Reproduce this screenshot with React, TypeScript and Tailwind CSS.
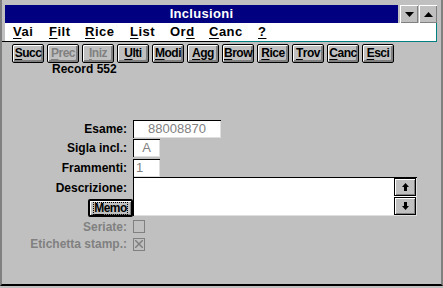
import React from 'react';

// Windows 3.1 style record form ("Inclusioni").

const FONT = "font-['Liberation_Sans',Arial,sans-serif]";

const tools = [
  { label: 'Succ', u: 0, off: false },
  { label: 'Prec', u: 0, off: true },
  { label: 'Iniz', u: 0, off: true },
  { label: 'Ulti', u: 0, off: false },
  { label: 'Modi', u: 0, off: false },
  { label: 'Agg', u: 0, off: false },
  { label: 'Brow', u: 0, off: false },
  { label: 'Rice', u: 0, off: false },
  { label: 'Trov', u: 0, off: false },
  { label: 'Canc', u: 0, off: false },
  { label: 'Esci', u: 0, off: false },
];

const menu = [
  { label: 'Vai', u: 0, w: 'w-[36px]' },
  { label: 'Filt', u: 0, w: 'w-[36px]' },
  { label: 'Rice', u: 0, w: 'w-[45px]' },
  { label: 'List', u: 0, w: 'w-[40px]' },
  { label: 'Ord', u: 2, w: 'w-[39px]' },
  { label: 'Canc', u: 0, w: 'w-[49px]' },
  { label: '?', u: 0, w: 'w-[20px]' },
];

function Mnemonic({ text, u }: { text: string; u: number }) {
  return (
    <>
      {text.slice(0, u)}
      <span className="underline underline-offset-2">{text[u]}</span>
      {text.slice(u + 1)}
    </>
  );
}

function ToolButton({ label, u, off }: { label: string; u: number; off: boolean }) {
  return (
    <div className="h-[19px] w-[32px] rounded-[2px] border border-black bg-[#c0c0c0] shadow-[inset_1px_1px_0_#fff,inset_-1px_-1px_0_#808080,inset_-2px_-2px_0_#808080]">
      <div
        className={`flex h-full items-center justify-center pb-[1px] text-[12px] leading-none font-bold tracking-[-0.5px] ${off ? 'text-[#808080]' : 'text-black'}`}
      >
        <Mnemonic text={label} u={u} />
      </div>
    </div>
  );
}

function Field({ w, value, center = false }: { w: string; value: string; center?: boolean }) {
  return (
    <div
      className={`${w} flex h-[18px] items-center bg-white text-[13px] text-[#808080] shadow-[inset_1px_1px_0_#000,inset_-1px_-1px_0_#dfdfdf] ${center ? 'justify-center' : 'pl-[3px]'}`}
    >
      {value}
    </div>
  );
}

function Label({ text, off = false }: { text: string; off?: boolean }) {
  return (
    <div className={`w-[125px] shrink-0 text-right text-[12px] font-bold ${off ? 'text-[#808080]' : 'text-black'}`}>
      {text}
    </div>
  );
}

function ArrowBtn({ up }: { up: boolean }) {
  return (
    <div className="flex h-[18px] w-[22px] items-center justify-center border border-black bg-[#c0c0c0] shadow-[inset_1px_1px_0_#fff,inset_-1px_-1px_0_#808080]">
      <svg width="7" height="8" viewBox="0 0 7 8">
        {up ? (
          <path d="M3.5 0L7 4H5V8H2V4H0Z" fill="#000" />
        ) : (
          <path d="M2 0H5V4H7L3.5 8L0 4H2Z" fill="#000" />
        )}
      </svg>
    </div>
  );
}

export default function App() {
  return (
    <div className={`${FONT} h-[288px] w-[443px] overflow-hidden bg-[#c0c0c0] select-none`}>
      <div className="flex h-[286px] flex-col border-r-2 border-b-2 border-l-2 border-r-[#808080] border-b-black border-l-[#808080] pt-[5px]">
        {/* title bar */}
        <div className="mr-[4px] ml-[3px] flex h-[18px] gap-[2px]">
          <div className="flex flex-1 items-center justify-center bg-[#000080] text-[13px] font-bold tracking-[0.3px] text-white">
            Inclusioni
          </div>
          <div className="flex gap-[1px]">
            {[false, true].map(up => (
              <div
                key={String(up)}
                className="flex h-[18px] w-[18px] items-center justify-center bg-[#c0c0c0] shadow-[inset_1px_1px_0_#fff,inset_-1px_-1px_0_#808080]"
              >
                <svg width="9" height="5" viewBox="0 0 9 5">
                  {up ? <path d="M4.5 0L9 5H0Z" fill="#000" /> : <path d="M0 0H9L4.5 5Z" fill="#000" />}
                </svg>
              </div>
            ))}
          </div>
        </div>

        {/* menu */}
        <div className="mr-[4px] ml-[3px] flex h-[18px] items-center border-r border-[#008080] bg-white pl-[8px] text-[13px] font-bold tracking-[0.5px]">
          {menu.map(m => (
            <div key={m.label} className={m.w}>
              <Mnemonic text={m.label} u={m.u} />
            </div>
          ))}
        </div>
        <div className="flex h-[2px]">
          <div className="h-[1px] w-[228px] bg-black" />
          <div className="mr-[4px] h-[1px] flex-1 bg-[#008080]" />
        </div>

        {/* toolbar */}
        <div className="mt-[1px] flex gap-[3px] pl-[10px]">
          {tools.map(t => (
            <ToolButton key={t.label} {...t} />
          ))}
        </div>
        <div className="pl-[50px] text-[12px] leading-[13px] font-bold">Record 552</div>

        {/* form */}
        <div className="mt-[43px] flex flex-col">
          <div className="flex h-[19px] items-center gap-[6px]">
            <Label text="Esame:" />
            <Field w="w-[88px]" value="88008870" center />
          </div>
          <div className="flex h-[20px] items-center gap-[6px]">
            <Label text="Sigla incl.:" />
            <Field w="w-[27px]" value="A" center />
          </div>
          <div className="flex h-[19px] items-center gap-[6px]">
            <Label text="Frammenti:" />
            <Field w="w-[27px]" value="1" />
          </div>
          <div className="flex h-[39px] gap-[6px]">
            <div className="flex w-[125px] shrink-0 flex-col items-end justify-between">
              <div className="pt-[2px] text-[12px] font-bold">Descrizione:</div>
              <div className="mr-[-6px] mb-[-1px] flex h-[18px] w-[45px] shrink-0 items-center justify-center rounded-[2px] border-2 border-black bg-[#c0c0c0] shadow-[inset_1px_1px_0_#fff,inset_-1px_-1px_0_#808080]">
                <span className="border border-dotted border-black text-[12px] leading-[11px] font-bold tracking-[-0.6px]">
                  <Mnemonic text="Memo" u={0} />
                </span>
              </div>
            </div>
            <div className="flex h-[39px] w-[284px] justify-end bg-white shadow-[inset_1px_1px_0_#000,inset_-1px_-1px_0_#dfdfdf]">
              <div className="flex flex-col justify-between py-[1px] pr-[1px]">
                <ArrowBtn up />
                <ArrowBtn up={false} />
              </div>
            </div>
          </div>
          <div className="mt-[3px] flex h-[15px] items-center gap-[6px]">
            <Label text="Seriate:" off />
            <div className="h-[13px] w-[12px] border border-[#808080] bg-[#c0c0c0]" />
          </div>
          <div className="mt-[2px] flex h-[16px] items-center gap-[6px]">
            <Label text="Etichetta stamp.:" off />
            <div className="flex h-[13px] w-[12px] items-center justify-center border border-[#808080] bg-[#c0c0c0]">
              <svg width="8" height="8" viewBox="0 0 8 8">
                <path d="M0 0L8 8M8 0L0 8" stroke="#808080" strokeWidth="1.5" />
              </svg>
            </div>
          </div>
        </div>
      </div>
    </div>
  );
}
